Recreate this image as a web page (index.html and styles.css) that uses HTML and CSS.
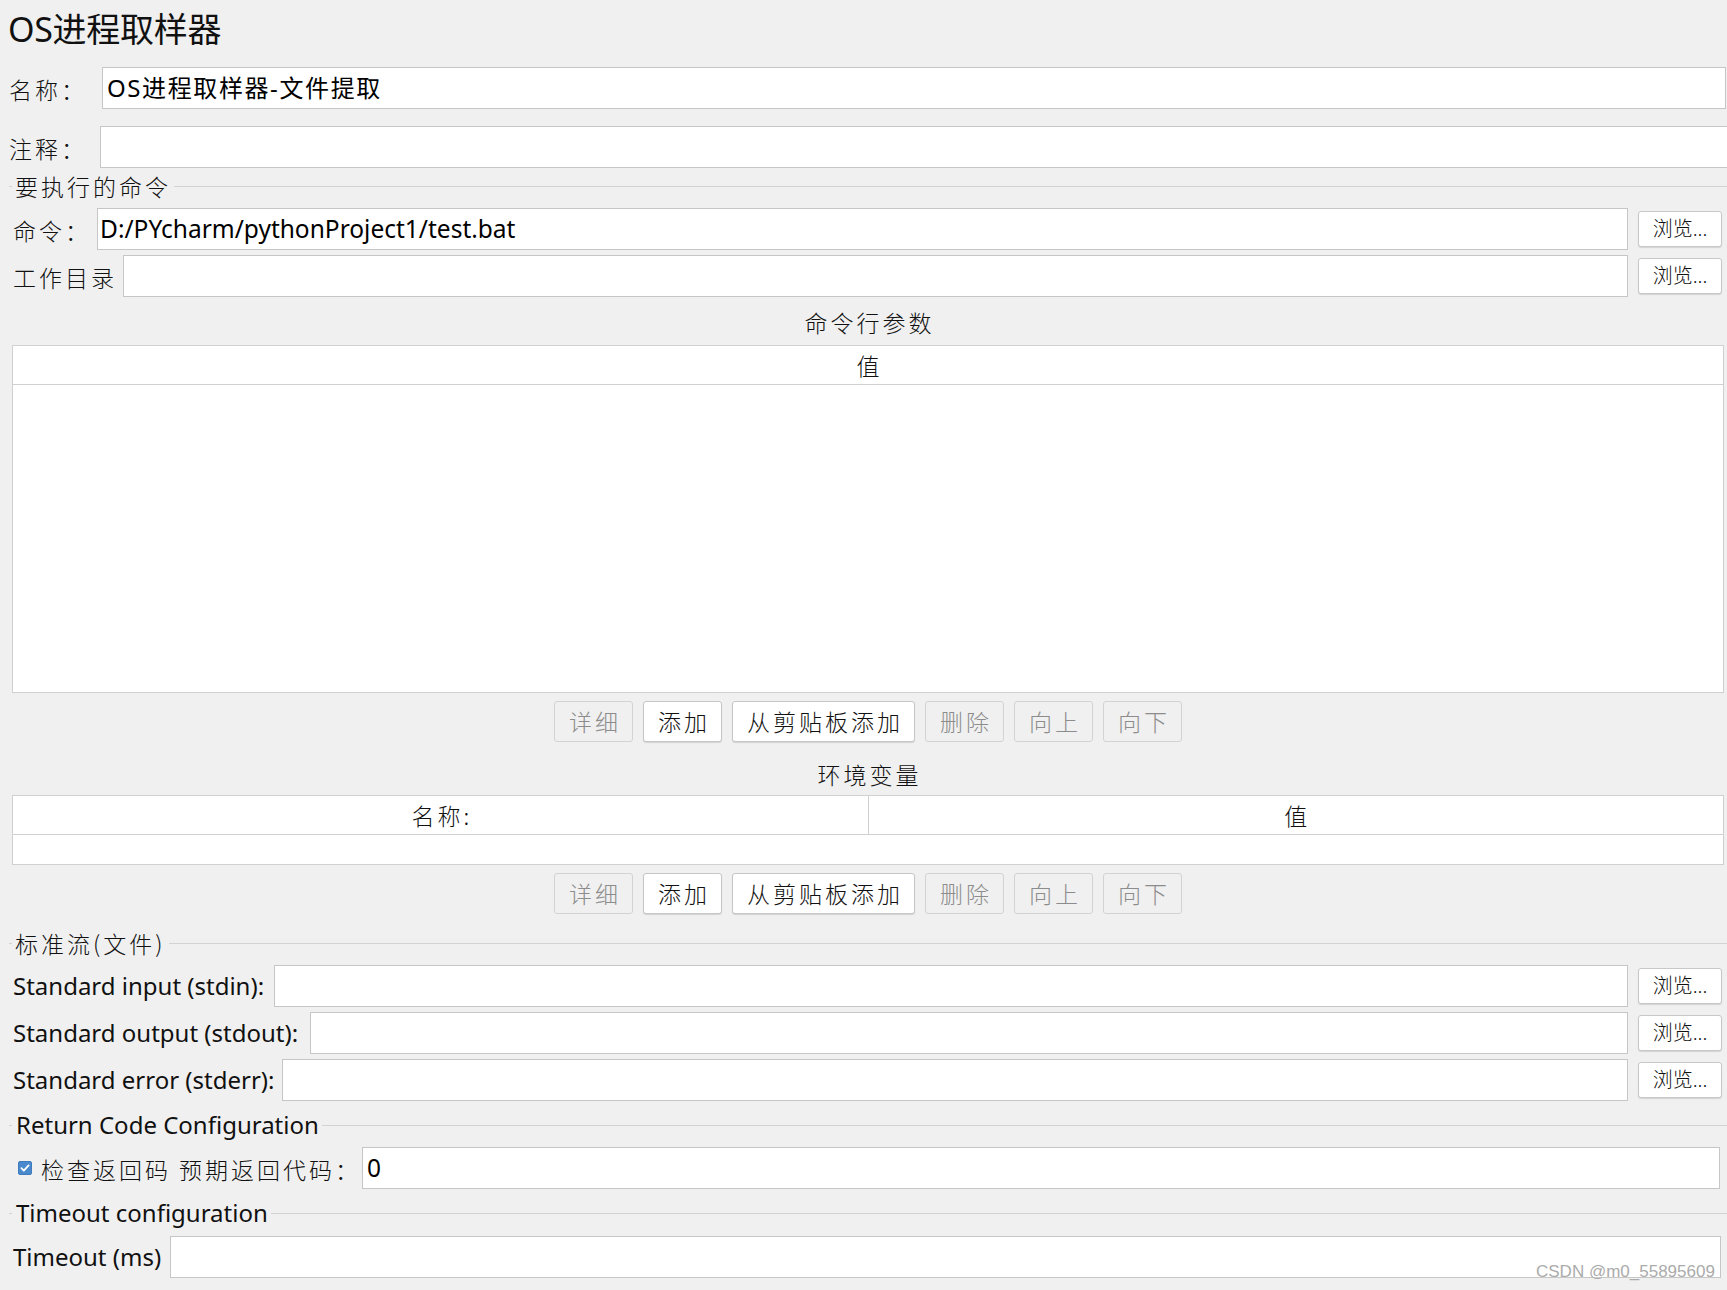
FILE: index.html
```html
<!DOCTYPE html>
<html lang="zh-CN">
<head>
<meta charset="utf-8">
<title>OS进程取样器</title>
<link rel="stylesheet" href="styles.css">
</head>
<body>
<div class="page">
  <h1 class="title">OS进程取样器</h1>

  <div class="row row-name">
    <span class="lbl cjk w-name">名称：</span>
    <div class="input val-name">OS进程取样器-文件提取</div>
  </div>
  <div class="row row-comment">
    <span class="lbl cjk w-comment">注释：</span>
    <div class="input input-bleed"></div>
  </div>

  <fieldset class="group group-cmd">
    <legend class="legend cjk">要执行的命令</legend>
    <div class="row row-first">
      <span class="lbl cjk w-cmd">命令：</span>
      <div class="input">D:/PYcharm/pythonProject1/test.bat</div>
      <button class="btn-browse" type="button">浏览...</button>
    </div>
    <div class="row row-next">
      <span class="lbl cjk w-dir">工作目录</span>
      <div class="input"></div>
      <button class="btn-browse" type="button">浏览...</button>
    </div>

    <div class="caption cjk cap-args">命令行参数</div>
    <div class="table table-args">
      <div class="thead"><div class="th cjk">值</div></div>
      <div class="tbody"></div>
    </div>
    <div class="btn-row">
      <button class="btn cjk" type="button" disabled>详细</button>
      <button class="btn cjk" type="button">添加</button>
      <button class="btn cjk" type="button">从剪贴板添加</button>
      <button class="btn cjk" type="button" disabled>删除</button>
      <button class="btn cjk" type="button" disabled>向上</button>
      <button class="btn cjk" type="button" disabled>向下</button>
    </div>

    <div class="caption cjk cap-env">环境变量</div>
    <div class="table table-env">
      <div class="thead"><div class="th cjk">名称:</div><div class="th th-split cjk">值</div></div>
      <div class="tbody"></div>
    </div>
    <div class="btn-row">
      <button class="btn cjk" type="button" disabled>详细</button>
      <button class="btn cjk" type="button">添加</button>
      <button class="btn cjk" type="button">从剪贴板添加</button>
      <button class="btn cjk" type="button" disabled>删除</button>
      <button class="btn cjk" type="button" disabled>向上</button>
      <button class="btn cjk" type="button" disabled>向下</button>
    </div>
  </fieldset>

  <fieldset class="group group-std">
    <legend class="legend cjk">标准流(文件)</legend>
    <div class="row row-first">
      <span class="lbl w-stdin">Standard input (stdin):</span>
      <div class="input"></div>
      <button class="btn-browse" type="button">浏览...</button>
    </div>
    <div class="row row-next">
      <span class="lbl w-stdout">Standard output (stdout):</span>
      <div class="input"></div>
      <button class="btn-browse" type="button">浏览...</button>
    </div>
    <div class="row row-next">
      <span class="lbl w-stderr">Standard error (stderr):</span>
      <div class="input"></div>
      <button class="btn-browse" type="button">浏览...</button>
    </div>
  </fieldset>

  <fieldset class="group group-ret">
    <legend class="legend legend-latin">Return Code Configuration</legend>
    <div class="row row-first row-check">
      <span class="checkbox">
        <svg width="14" height="14" viewBox="0 0 14 14"><rect x="0.5" y="0.5" width="13" height="13" rx="1.5" fill="#4a89cc" stroke="#3f7bbd"/><path d="M3.4 7.2 L5.8 9.6 L10.6 4.4" fill="none" stroke="#fff" stroke-width="1.8" stroke-linecap="round" stroke-linejoin="round"/></svg>
      </span>
      <span class="lbl cjk w-ret">检查返回码 预期返回代码：</span>
      <div class="input input-ret">0</div>
    </div>
  </fieldset>

  <fieldset class="group group-timeout">
    <legend class="legend legend-latin">Timeout configuration</legend>
    <div class="row row-timeout">
      <span class="lbl w-timeout">Timeout (ms)</span>
      <div class="input input-timeout"></div>
    </div>
  </fieldset>
</div>
<div class="watermark">CSDN @m0_55895609</div>
</body>
</html>
```

FILE: styles.css
```css
* { box-sizing: border-box; }

html, body {
  margin: 0;
  padding: 0;
  background: #f0f0f0;
}

body {
  width: 1727px;
  height: 1290px;
  overflow: hidden;
  position: relative;
  font-family: "Noto Sans", "Noto Sans CJK SC", sans-serif;
  color: #111;
}

.page {
  height: 1290px;
  padding-left: 9px;
  border-bottom: 1px solid #a9a9a9;
}

.cjk {
  font-family: "Noto Sans CJK SC", sans-serif;
  font-size: 23px;
  font-weight: 300;
  letter-spacing: 3px;
}

.title {
  margin: 12px 0 0 -1px;
  font-size: 34px;
  line-height: 34px;
  font-weight: 400;
  color: #111;
  letter-spacing: -0.3px;
}

/* rows */
.row {
  display: flex;
  align-items: center;
  height: 42px;
}

.row-name { margin-top: 21px; }
.row-comment { margin-top: 17px; }
.row-first { margin-top: 8px; }
.row-next { margin-top: 5px; }

.lbl {
  flex: none;
  white-space: nowrap;
  font-size: 24px;
  line-height: 42px;
  color: #111;
}

.lbl.cjk {
  font-size: 23px;
  padding-top: 2px;
}

.group .lbl { padding-left: 1px; }

.w-name { width: 93px; }
.w-comment { width: 91px; }
.w-cmd { width: 85px; }
.w-dir { width: 111px; }
.w-stdin { width: 262px; }
.w-stdout { width: 298px; }
.w-stderr { width: 270px; }
.w-ret { width: 322px; }
.w-timeout { width: 158px; }

.input {
  flex: 1;
  min-width: 0;
  height: 42px;
  background: #fff;
  border: 1px solid #c6c6c6;
  font-size: 24.5px;
  line-height: 40px;
  padding-left: 2px;
  white-space: nowrap;
  overflow: hidden;
  color: #000;
}

.row-name .input { margin-right: 1px; }
.val-name { font-size: 24px; letter-spacing: 1.6px; padding-left: 4px; }
.input-bleed { margin-right: -4px; }

.btn-browse {
  flex: none;
  width: 84px;
  height: 36px;
  margin: 0 2px 0 10px;
  padding: 0;
  background: #fff;
  border: 1px solid #c8c8c8;
  border-radius: 3px;
  box-shadow: 0 1px 1px rgba(0, 0, 0, 0.12);
  font-family: "Noto Sans", "Noto Sans CJK SC", sans-serif;
  font-size: 20px;
  font-weight: 300;
  line-height: 34px;
  color: #111;
}

/* fieldsets */
.group {
  margin: 0;
  padding: 0 3px;
  min-width: 0;
  border: 0;
  border-top: 1px solid #d3d3d3;
}

.group-cmd { margin-top: 4px; }
.group-std { margin-top: 15px; }
.group-ret { margin-top: 10px; }
.group-timeout { margin-top: 10px; }

.legend {
  padding: 0 3px;
  line-height: 28px;
  color: #111;
}

.legend-latin {
  font-size: 24px;
  padding: 0 3px 0 4px;
}

/* captions */
.caption {
  text-align: center;
  line-height: 30px;
  color: #111;
  padding-left: 3px;
}

.cap-args { margin: 10px 0 8px; }
.cap-env { margin: 17px 0 6px; }

/* tables */
.table {
  background: #fff;
  border: 1px solid #d0d0d0;
}

.thead {
  display: flex;
  height: 39px;
  border-bottom: 1px solid #d0d0d0;
}

.th {
  flex: 1;
  text-align: center;
  line-height: 38px;
  padding-left: 3px;
  color: #111;
}

.th-split { border-left: 1px solid #d0d0d0; }

.table-args .tbody { height: 307px; }
.table-env .tbody { height: 29px; }

/* buttons */
.btn-row {
  display: flex;
  justify-content: center;
  gap: 10px;
  margin-top: 8px;
}

.btn {
  height: 41px;
  padding: 0 11px 0 14px;
  background: #fff;
  border: 1px solid #c6c6c6;
  border-radius: 3px;
  box-shadow: 0 1px 1px rgba(0, 0, 0, 0.12);
  line-height: 39px;
  color: #111;
}

.btn:disabled {
  background: #f0f0f0;
  border-color: #d3d3d3;
  box-shadow: none;
  color: #8c8c8c;
}

/* checkbox row */
.row-check { margin-top: 8px; }

.checkbox {
  flex: none;
  width: 14px;
  height: 14px;
  margin: 0 8px 0 6px;
  display: flex;
}

.input-ret { margin-right: 4px; padding-left: 4px; }

.row-timeout { margin-top: 9px; }
.input-timeout { margin-right: 3px; }

.watermark {
  position: absolute;
  left: 1536px;
  top: 1263px;
  font-family: "Liberation Sans", Arial, sans-serif;
  font-size: 17px;
  line-height: 17px;
  color: #ababab;
  text-shadow: 0 0 1px #fff;
  white-space: nowrap;
}
```
